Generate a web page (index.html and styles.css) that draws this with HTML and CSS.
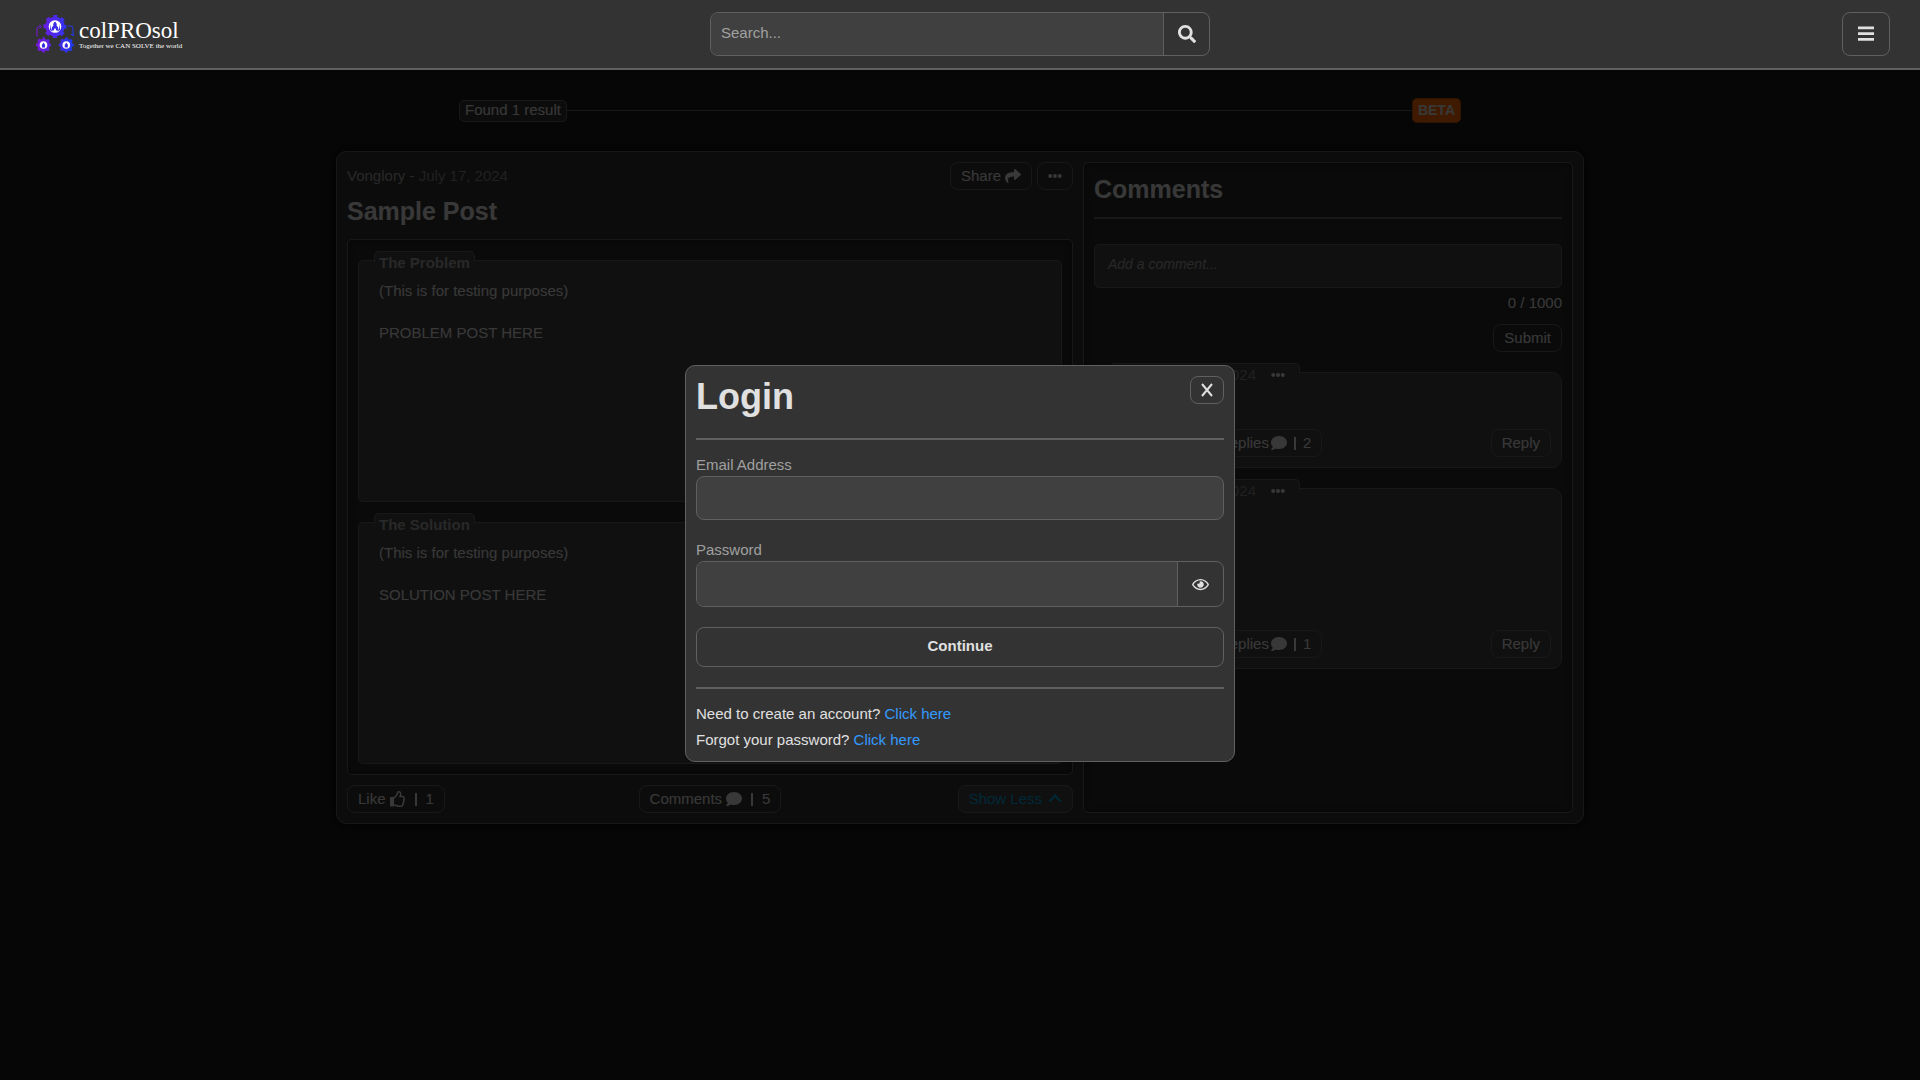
FILE: index.html
```html
<!DOCTYPE html>
<html lang="en">
<head>
<meta charset="utf-8">
<meta name="viewport" content="width=device-width, initial-scale=1">
<title>colPROsol</title>
<link rel="stylesheet" href="styles.css">
</head>
<body>
<svg class="sprite" aria-hidden="true">
  <symbol id="i-comment" viewBox="0 0 512 512"><path d="M256 32C114.600 32 0 125.100 0 240c0 49.600 21.400 95 57 130.700C44.500 421.100 2.700 466 2.200 466.500c-2.200 2.300-2.800 5.700-1.500 8.700S4.800 480 8 480c66.300 0 116-31.800 140.600-51.400 32.700 12.300 69 19.400 107.400 19.400 141.400 0 256-93.100 256-208S397.400 32 256 32z"/></symbol>
  <symbol id="i-dots" viewBox="0 0 14 14"><circle cx="2.200" cy="7" r="2"/><circle cx="7" cy="7" r="2"/><circle cx="11.800" cy="7" r="2"/></symbol>
  <symbol id="i-thumb" viewBox="0 0 512 512"><path d="M0 225h110v240H0z"/><path d="M466.270 286.690C475.040 271.840 480 256 480 236.850c0-44.015-37.218-85.580-85.820-85.580H357.700c4.920-12.810 8.850-28.130 8.850-46.540C366.550 31.936 328.860 0 271.280 0c-61.607 0-58.093 94.933-71.760 108.600-22.747 22.747-49.615 66.447-68.760 83.400H32c-17.673 0-32 14.327-32 32v240c0 17.673 14.327 32 32 32h64c14.893 0 27.408-10.174 30.978-23.950 44.509 1.001 75.060 39.940 177.802 39.940 7.220 0 15.220.010 22.220.010 77.117 0 111.986-39.423 112.940-95.330 13.319-18.425 20.299-43.122 17.340-66.990 9.854-18.452 13.664-40.343 8.990-62.990zm-61.750 53.830c12.560 21.130 1.260 49.410-13.940 57.570 7.700 48.780-17.608 65.900-53.120 65.900h-37.820c-71.639 0-118.029-37.820-171.640-37.820V240h10.920c28.360 0 67.980-70.890 94.540-97.460 28.360-28.360 18.910-75.630 37.820-94.540 47.270 0 47.270 32.980 47.270 56.730 0 39.170-28.360 56.720-28.360 94.540h103.990c21.110 0 37.730 18.910 37.820 37.820.090 18.900-12.820 37.810-22.270 37.810 13.489 14.555 16.371 45.236-5.210 65.620z"/></symbol>
</svg>

<header class="topbar">
  <a class="logo" href="#" aria-label="colPROsol home">
    <svg class="logo-mark" viewBox="0 0 38 38" aria-hidden="true">
      <defs>
        <linearGradient id="g" gradientUnits="userSpaceOnUse" x1="0" y1="0" x2="38" y2="0">
          <stop offset="0" stop-color="#7a16e0"/><stop offset="1" stop-color="#1d3cf5"/>
        </linearGradient>
      </defs>
      <g fill="none" stroke="url(#g)">
        <circle cx="19" cy="11.500" r="7.800" stroke-width="4"/>
        <circle cx="19" cy="11.500" r="10.300" stroke-width="2.600" stroke-dasharray="4.045 4.045" stroke-dashoffset="2"/>
        <circle cx="7.500" cy="30" r="4.900" stroke-width="2.800"/>
        <circle cx="7.500" cy="30" r="6.700" stroke-width="1.800" stroke-dasharray="2.631 2.631" stroke-dashoffset="1.300"/>
        <circle cx="30.300" cy="30" r="4.900" stroke-width="2.800"/>
        <circle cx="30.300" cy="30" r="6.700" stroke-width="1.800" stroke-dasharray="2.631 2.631" stroke-dashoffset="1.300"/>
        <path d="M1 21.500V14q0-2.500 3-2.500M3.500 9.500l2 2-2 2M32 11h2.500q2.500 0 2.500 2.500V20M35 19l2 2 1-2"/>
      </g>
      <g fill="#fff"><circle cx="19" cy="11.500" r="6.300"/><circle cx="7.500" cy="30" r="3.800"/><circle cx="30.300" cy="30" r="3.800"/></g>
      <g fill="#3a2be8">
        <path d="M19 6.500c-2 1.500-2 3.500-1.600 4.500-1.400.5-1.900 2-1.600 4.500h2l.5-2h1.400l.5 2h2c.3-2.500-.2-4-1.600-4.500.4-1 .4-3-1.600-4.500z"/>
        <path d="M14 9l1 5 2 2.500-3-1.500zM24 9l-1 5-2 2.500 3-1.500z"/>
        <path d="M7.500 27.500q-2.500 2.500-1.500 5h3q1-2.500-1.500-5zM30.300 27.500q-2.500 2.500-1.500 5h3q1-2.500-1.500-5z"/>
      </g>
    </svg>
    <span class="logo-text">
      <span class="logo-name">colPROsol</span>
      <span class="logo-tag">Together we CAN SOLVE the world</span>
    </span>
  </a>
  <form class="search" role="search">
    <input class="group-input" type="search" placeholder="Search..." aria-label="Search">
    <button class="group-btn" type="button" aria-label="Search">
      <svg class="icon-lg" viewBox="0 0 512 512"><path d="M505 442.700L405.300 343c-4.500-4.500-10.600-7-17-7H372c27.600-35.300 44-79.700 44-128C416 93.100 322.900 0 208 0S0 93.100 0 208s93.100 208 208 208c48.300 0 92.700-16.400 128-44v16.300c0 6.400 2.500 12.500 7 17l99.700 99.700c9.400 9.400 24.600 9.400 33.900 0l28.300-28.300c9.400-9.400 9.400-24.600.1-34zM208 336c-70.700 0-128-57.200-128-128 0-70.700 57.200-128 128-128 70.700 0 128 57.200 128 128 0 70.700-57.200 128-128 128z"/></svg>
    </button>
  </form>
  <div class="topbar-end">
    <button class="menu-btn" type="button" aria-label="Menu">
      <svg class="icon-lg" viewBox="0 0 18 18"><path d="M1 1.500h16v2.800H1zM1 7.200h16v2.800H1zM1 12.900h16v2.800H1z"/></svg>
    </button>
  </div>
</header>

<main class="page">
  <div class="results">
    <span class="results-count">Found 1 result</span>
    <span class="results-line"></span>
    <span class="beta">BETA</span>
  </div>

  <article class="card">
    <section class="post">
      <div class="post-head">
        <p class="meta">Vonglory - <time class="date" datetime="2024-07-17">July 17, 2024</time></p>
        <div class="actions">
          <button class="btn" type="button">Share
            <svg class="icon" viewBox="0 0 512 512"><path d="M503.691 189.836L327.687 37.851C312.281 24.546 288 35.347 288 56.015v80.053C127.371 137.907 0 170.100 0 322.326c0 61.441 39.581 122.309 83.333 154.132 13.653 9.931 33.111-2.533 28.077-18.631C66.066 312.814 132.917 274.316 288 272.085V360c0 20.700 24.300 31.453 39.687 18.164l176.004-152c11.071-9.562 11.086-26.753 0-36.328z"/></svg>
          </button>
          <button class="btn" type="button" aria-label="More"><svg class="icon-sm"><use href="#i-dots"/></svg></button>
        </div>
      </div>
      <h1 class="title">Sample Post</h1>
      <div class="post-body">
        <section class="block">
          <h2 class="tab">The Problem</h2>
          <p>(This is for testing purposes)<br><br>PROBLEM POST HERE</p>
        </section>
        <section class="block">
          <h2 class="tab">The Solution</h2>
          <p>(This is for testing purposes)<br><br>SOLUTION POST HERE</p>
        </section>
      </div>
      <div class="post-foot">
        <button class="btn" type="button">Like <svg class="icon"><use href="#i-thumb"/></svg><span class="bar"></span>1</button>
        <button class="btn" type="button">Comments <svg class="icon"><use href="#i-comment"/></svg><span class="bar"></span>5</button>
        <button class="btn btn-less" type="button">Show Less <svg class="icon-sm" viewBox="0 0 14 14"><path class="stroke" d="M1.500 9.500L7 3.500l5.500 6"/></svg></button>
      </div>
    </section>

    <section class="comments">
      <h2 class="title comments-title">Comments</h2>
      <textarea class="comment-input" placeholder="Add a comment..." aria-label="Add a comment" rows="1"></textarea>
      <p class="counter">0 / 1000</p>
      <button class="btn submit" type="button">Submit</button>
      <article class="comment">
        <div class="tab comment-tab"><span class="date">Guest - July 17, 2024</span><button class="more" type="button" aria-label="More"><svg class="icon-sm"><use href="#i-dots"/></svg></button></div>
        <div class="comment-foot">
          <button class="btn" type="button">Like <svg class="icon"><use href="#i-thumb"/></svg><span class="bar"></span>1</button>
          <button class="btn btn-replies" type="button">Replies <svg class="icon"><use href="#i-comment"/></svg><span class="bar"></span>2</button>
          <button class="btn reply" type="button">Reply</button>
        </div>
      </article>
      <article class="comment comment-tall">
        <div class="tab comment-tab"><span class="date">Guest - July 17, 2024</span><button class="more" type="button" aria-label="More"><svg class="icon-sm"><use href="#i-dots"/></svg></button></div>
        <div class="comment-foot">
          <button class="btn" type="button">Like <svg class="icon"><use href="#i-thumb"/></svg><span class="bar"></span>1</button>
          <button class="btn btn-replies" type="button">Replies <svg class="icon"><use href="#i-comment"/></svg><span class="bar"></span>1</button>
          <button class="btn reply" type="button">Reply</button>
        </div>
      </article>
    </section>
  </article>
</main>

<div class="overlay">
  <div class="login" role="dialog" aria-modal="true" aria-labelledby="login-title">
    <div class="login-head">
      <h2 class="login-title" id="login-title">Login</h2>
      <button class="btn close" type="button" aria-label="Close"><svg class="icon-sm" viewBox="0 0 14 14"><path class="stroke" d="M2 1l10 12M12 1L2 13"/></svg></button>
    </div>
    <form class="login-form">
      <label class="label" for="email">Email Address</label>
      <input class="field" id="email" type="email">
      <label class="label label-next" for="password">Password</label>
      <div class="password">
        <input class="group-input" id="password" type="password">
        <button class="group-btn" type="button" aria-label="Show password">
          <svg class="icon-eye" viewBox="0 0 576 512"><path d="M288 144a110.940 110.940 0 0 0-31.240 5 55.400 55.400 0 0 1 7.240 27 56 56 0 0 1-56 56 55.400 55.400 0 0 1-27-7.240A111.710 111.710 0 1 0 288 144zm284.520 97.400C518.290 135.590 410.930 64 288 64S57.680 135.640 3.480 241.410a32.350 32.350 0 0 0 0 29.190C57.710 376.410 165.070 448 288 448s230.320-71.640 284.520-177.400a32.350 32.350 0 0 0 0-29.190zM288 400c-98.650 0-189.090-55-237.930-144C98.910 167 189.340 112 288 112s189.090 55 237.930 144C477.100 345 386.660 400 288 400z"/></svg>
        </button>
      </div>
      <button class="continue" type="button">Continue</button>
    </form>
    <div class="login-foot">
      <p>Need to create an account? <a href="#">Click here</a></p>
      <p>Forgot your password? <a href="#">Click here</a></p>
    </div>
  </div>
</div>
</body>
</html>
```
FILE: styles.css
```css
:root {
  --bg: #1a1a1a;
  --surface: #333;
  --sunken: #292929;
  --raised: #404040;
  --line: #606060;
  --text: #e0e0e0;
  --muted: #a0a0a0;
}
* { box-sizing: border-box; margin: 0; }
body {
  min-height: 100vh;
  background: var(--bg);
  color: var(--text);
  font: 15px/20px "Liberation Sans", Arial, sans-serif;
}
button, input, textarea { font: inherit; color: inherit; }
button { padding: 0; background: none; border: 0; cursor: pointer; }
svg { fill: currentColor; flex: none; }
.sprite { position: absolute; width: 0; height: 0; }
.stroke { fill: none; stroke: currentColor; stroke-width: 2; }
.icon { width: 16px; height: 16px; }
.icon-sm { width: 14px; height: 14px; }
.icon-lg { width: 18px; height: 18px; }
.icon-eye { width: 17px; height: 15px; }

/* Top bar */
.topbar {
  position: relative;
  z-index: 2;
  display: grid;
  grid-template-columns: 1fr 500px 1fr;
  align-items: center;
  padding: 12px 30px;
  background: var(--surface);
  border-bottom: 2px solid var(--line);
}
.logo {
  display: flex;
  align-items: center;
  gap: 5px;
  padding-left: 6px;
  color: #fff;
  text-decoration: none;
}
.logo-mark { width: 38px; height: 38px; }
.logo-text { display: flex; flex-direction: column; font-family: "Liberation Serif", "Times New Roman", serif; }
.logo-name { font-size: 23px; line-height: 24px; }
.logo-tag { font-size: 7px; line-height: 7px; }
.search, .password {
  display: flex;
  height: 44px;
  border: 1px solid var(--line);
  border-radius: 8px;
  overflow: hidden;
}
.password { height: 46px; }
.group-input {
  flex: 1;
  min-width: 0;
  padding: 0 10px 2px;
  background: var(--raised);
  border: 0;
  outline: 0;
}
::placeholder { color: var(--muted); opacity: 1; }
.group-btn {
  display: grid;
  place-items: center;
  width: 46px;
  border-left: 1px solid var(--line);
}
.topbar-end { display: flex; justify-content: flex-end; }
.menu-btn {
  display: grid;
  place-items: center;
  width: 48px;
  height: 44px;
  border: 1px solid var(--line);
  border-radius: 8px;
}

/* Results */
.page { width: 65%; margin: 0 auto; padding: 28px 0; }
.results { display: flex; align-items: center; margin: 0 123px 28px; }
.results-count {
  padding: 0 5px 2px;
  line-height: 18px;
  background: var(--surface);
  border: 1px solid var(--line);
  border-radius: 5px;
}
.results-line { flex: 1; height: 1px; background: var(--line); }
.beta {
  padding: 0 5px;
  font-size: 14px;
  font-weight: bold;
  line-height: 23px;
  background: #ff6a00;
  border: 1px solid #c04c00;
  border-radius: 5px;
}

/* Post card */
.card {
  display: grid;
  grid-template-columns: 726fr 490fr;
  gap: 10px;
  padding: 10px;
  background: var(--surface);
  border: 1px solid var(--line);
  border-radius: 10px;
  box-shadow: 0 0 10px #000;
}
.post-head { display: flex; justify-content: space-between; align-items: center; }
.meta { color: var(--muted); }
.date { color: #808080; }
.actions { display: flex; gap: 5px; }
.btn {
  display: inline-flex;
  align-items: center;
  gap: 4px;
  height: 28px;
  padding: 0 10px;
  border: 1px solid var(--line);
  border-radius: 8px;
}
.bar { width: 2px; height: 13px; margin: 0 5px; background: currentColor; }
.btn-replies { gap: 2px; }
.title { margin-top: 5px; font-size: 25px; line-height: 32px; }
.post-body {
  display: grid;
  gap: 20px;
  margin: 12px 0 10px;
  padding: 20px 10px 10px;
  background: var(--sunken);
  border: 1px solid var(--line);
  border-radius: 5px;
  box-shadow: inset 0 0 10px #1a1a1a;
}
.block {
  position: relative;
  min-height: 242px;
  padding: 19px 20px;
  line-height: 21px;
  background: var(--raised);
  border: 1px solid var(--line);
  border-radius: 5px;
}
.tab {
  position: absolute;
  top: -10px;
  left: 15px;
  height: 11px;
  padding: 0 4px;
  background: var(--raised);
  border: 1px solid var(--line);
  border-bottom: 0;
  border-radius: 5px 5px 0 0;
  color: var(--muted);
  font-size: 15px;
  line-height: 21px;
}
.post-foot { display: grid; grid-template-columns: 1fr auto 1fr; justify-items: start; }
.btn-less { justify-self: end; gap: 6px; background: var(--raised); color: #00a0d8; }

/* Comments */
.comments {
  display: flex;
  flex-direction: column;
  padding: 10px;
  background: var(--sunken);
  border: 1px solid var(--line);
  border-radius: 5px;
  box-shadow: inset 0 0 10px #1a1a1a;
}
.comments-title {
  margin: 0 0 25px;
  padding-bottom: 12px;
  border-bottom: 2px solid var(--line);
}
.comment-input {
  height: 44px;
  padding: 9px 13px;
  background: var(--raised);
  border: 1px solid var(--line);
  border-radius: 5px;
  resize: none;
  overflow: hidden;
  font-size: 14px;
}
.comment-input::placeholder { font-style: italic; }
.counter { margin: 5px 0 11px; text-align: right; }
.submit { align-self: flex-end; }
.comment {
  position: relative;
  display: flex;
  flex-direction: column;
  justify-content: flex-end;
  min-height: 96px;
  margin-top: 20px;
  padding: 10px;
  background: var(--raised);
  border: 1px solid var(--line);
  border-radius: 10px;
}
.comment-tall { min-height: 181px; }
.comment-tab {
  display: flex;
  justify-content: flex-end;
  gap: 15px;
  width: 190px;
  padding: 0 14px 0 0;
  white-space: nowrap;
}
.more { display: flex; align-items: center; height: 21px; color: var(--text); }
.comment-foot { display: flex; gap: 5px; }
.reply { margin-left: auto; }

/* Login dialog */
.overlay {
  position: fixed;
  inset: 0;
  z-index: 1;
  display: grid;
  place-content: center;
  grid-template-columns: minmax(0, 550px);
  padding-top: 47px;
  background: rgba(0, 0, 0, 0.75);
}
.login {
  padding: 10px 10px 8px;
  background: var(--surface);
  border: 1px solid var(--line);
  border-radius: 10px;
}
.login-head {
  display: flex;
  justify-content: space-between;
  align-items: flex-start;
  padding-bottom: 20px;
  border-bottom: 2px solid var(--line);
}
.login-title { font-size: 36px; line-height: 42px; }
.close { padding: 0 9px; }
.login-form {
  display: flex;
  flex-direction: column;
  padding: 15px 0 20px;
  border-bottom: 2px solid var(--line);
}
.label { padding-bottom: 1px; color: var(--muted); }
.label-next { margin-top: 20px; }
.field {
  height: 44px;
  padding: 0 10px;
  background: var(--raised);
  border: 1px solid var(--line);
  border-radius: 8px;
  outline: 0;
}
.continue {
  height: 40px;
  margin-top: 20px;
  padding-bottom: 2px;
  border: 1px solid var(--line);
  border-radius: 8px;
  font-weight: bold;
}
.login-foot { padding-top: 12px; line-height: 26px; }
.login-foot a { color: #3399ff; text-decoration: none; }
```
